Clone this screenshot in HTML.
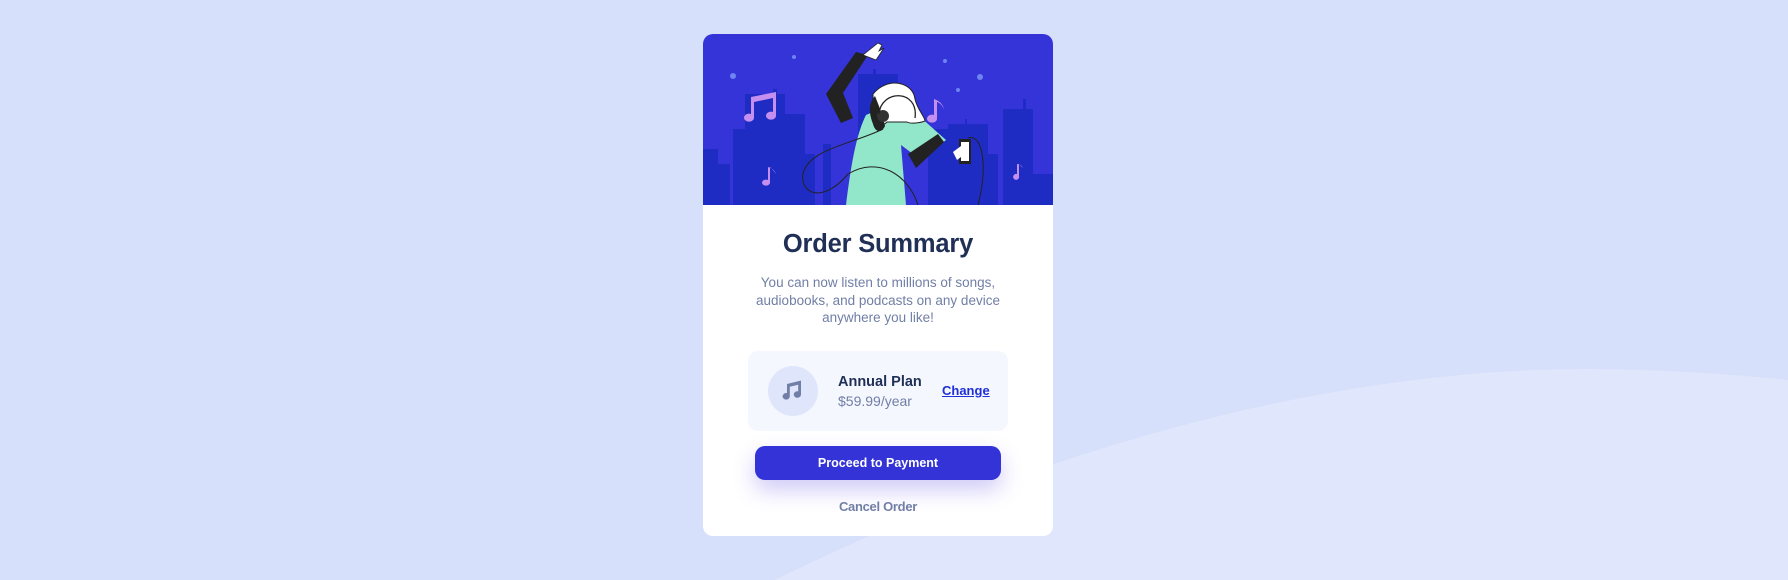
<!DOCTYPE html>
<html><head><meta charset="utf-8"><style>
html,body{margin:0;padding:0}
body{width:1788px;height:580px;background:#d6e0fa;position:relative;overflow:hidden;font-family:"Liberation Sans",sans-serif}
.wave{position:absolute;left:0;top:0}
.card{position:absolute;left:703px;top:34px;width:350px;height:502px;background:#fff;border-radius:10px;overflow:hidden}
.hero{position:absolute;left:0;top:0;width:350px;height:171px}
h1{position:absolute;left:0;width:350px;top:196px;margin:0;text-align:center;font-size:25.5px;font-weight:bold;color:#1f2f56;letter-spacing:-0.2px}
p.d{position:absolute;left:40px;width:270px;top:240px;margin:0;text-align:center;font-size:13.5px;line-height:17.5px;color:#717fa6}
.plan{position:absolute;left:45px;top:317px;width:260px;height:80px;background:#f5f7ff;border-radius:10px}
.ic{position:absolute;left:20px;top:15px;width:50px;height:50px;border-radius:50%;background:#dfe6fb}
.pn{position:absolute;left:90px;top:23px;font-size:14.5px;font-weight:bold;color:#1f2f56}
.pp{position:absolute;left:90px;top:42px;font-size:14px;color:#717fa6}
.ch{position:absolute;left:194px;top:32px;font-size:13px;font-weight:bold;color:#1f2fd8;text-decoration:underline}
.btn{position:absolute;left:52px;top:412px;width:246px;height:34px;border-radius:10px;background:#3333d8;color:#fff;font-size:12.5px;font-weight:bold;text-align:center;line-height:34px;box-shadow:0 10px 22px rgba(100,80,230,.3)}
.cn{position:absolute;left:0;width:350px;top:465px;text-align:center;font-size:13px;font-weight:bold;color:#717fa6;letter-spacing:-0.3px}
</style></head><body>
<svg class="wave" width="1788" height="580"><path d="M775 580 C1100 420 1400 360 1640 370 C1700 372 1750 376 1788 380 L1788 580 Z" fill="#e0e6fb"/></svg>
<div class="card">
<svg class="hero" width="350" height="171" viewBox="0 0 350 171">
<rect width="350" height="171" fill="#3434d8"/>
<g fill="#1e2cc4">
<path d="M0 115h15v56H0z M15 130h12v41H15z M30 95h12v76H30z M42 60h40v111H42z M70 55h4v10h-4z M82 80h20v91H82z M102 120h10v51h-10z M120 110h8v61h-8z M155 40h40v131h-40z M170 35h3v10h-3z M225 95h20v76h-20z M245 90h40v81h-40z M262 85h2v10h-2z M285 120h10v51h-10z M300 75h30v96h-30z M320 65h3v12h-3z M330 140h20v31h-20z"/>
</g>
<g fill="#6e84f0"><circle cx="30" cy="42" r="3"/><circle cx="91" cy="23" r="2"/><circle cx="242" cy="27" r="2"/><circle cx="277" cy="43" r="3"/><circle cx="255" cy="56" r="2"/></g>
<g fill="#c58ff0">
<path d="M48 63l25-5v24a5 4 0 1 1-3-4v-14l-19 4v16a5 4 0 1 1-3-4z"/>
<path d="M234 65v20a5 4 0 1 1-3-4v-16c6 2 9 6 10 10c-2-4-4-6-7-7z"/>
<path d="M67 133v16a4 3 0 1 1-2-3v-13c4 1 7 4 8 7c-2-3-4-5-6-7z"/>
<path d="M316 130v12a3 3 0 1 1-2-2v-10c3 0 5 2 6 4z"/>
</g>
<path d="M143 171c5-40 10-70 20-90l35-15 45 40-25 20-20-15 5 60z" fill="#92e6c9"/>
<path d="M123 60l30-42 12 3-25 38 10 25-12 5z M205 120l30-20 6 8-28 26z" fill="#222"/>
<path d="M160 21l15-12 4 2-3 6 5-3-8 12z" fill="#fff" stroke="#222" stroke-width=".8"/>
<path d="M170 60c15-18 40-12 42 5c2 10 10 18 10 22c-5 2-15 3-18 1l-20 0c-6 6-12 4-14-10z" fill="#fff" stroke="#222"/>
<path d="M170 90c-4-10-5-20 2-28c4 10 8 20 10 30c-4 8-10 6-12-2z" fill="#222"/>
<circle cx="180" cy="82" r="6" fill="#333"/>
<path d="M176 80c2-25 40-25 36 4" fill="none" stroke="#222" stroke-width="1.3"/>
<rect x="256" y="105" width="12" height="25" fill="#222"/><rect x="258" y="108" width="8" height="19" fill="#fff"/>
<path d="M250 118l8-6 4 8-8 6z" fill="#fff"/>
<path d="M180 95c-30 15-75 20-80 45c-3 20 20 30 45 0c30-18 60 0 70 31M265 104c15-5 20 30 10 67" fill="none" stroke="#222" stroke-width="1"/>
</svg>
<h1>Order Summary</h1>
<p class="d">You can now listen to millions of songs, audiobooks, and podcasts on any device anywhere you like!</p>
<div class="plan">
<div class="ic"><svg width="50" height="50" viewBox="0 0 50 50"><path d="M19 18l14-3.5v14a3.6 3.3 0 1 1-2.8-3.2v-6.5l-8.4 2v9.5a3.6 3.3 0 1 1-2.8-3.2z" fill="#717fa6"/></svg></div>
<div class="pn">Annual Plan</div>
<div class="pp">$59.99/year</div>
<div class="ch">Change</div>
</div>
<div class="btn">Proceed to Payment</div>
<div class="cn">Cancel Order</div>
</div>
</body></html>
